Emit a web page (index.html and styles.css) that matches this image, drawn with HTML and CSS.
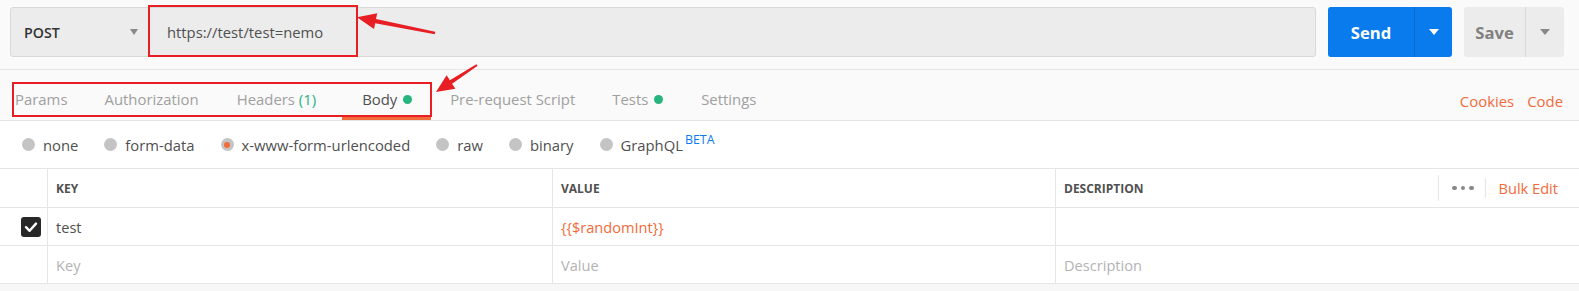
FILE: index.html
```html
<!DOCTYPE html>
<html>
<head>
<meta charset="utf-8">
<link rel="stylesheet" href="styles.css">
</head>
<body>
<div class="page">
  <div class="topbar">
    <div class="urlbar">
      <div class="method"><span class="method-name">POST</span><span class="caret grey"></span></div>
      <div class="url">https://test/test=nemo</div>
    </div>
    <div class="btn send"><span class="btn-main">Send</span><span class="btn-drop"><span class="caret white"></span></span></div>
    <div class="btn save"><span class="btn-main">Save</span><span class="btn-drop"><span class="caret grey big"></span></span></div>
  </div>

  <div class="tabs">
    <div class="tab first">Params</div>
    <div class="tab auth">Authorization</div>
    <div class="tab headers">Headers <span class="count">(1)</span></div>
    <div class="tab active">Body <span class="gdot"></span></div>
    <div class="tab">Pre-request Script</div>
    <div class="tab tests">Tests <span class="gdot"></span></div>
    <div class="tab">Settings</div>
    <div class="links"><span>Cookies</span><span>Code</span></div>
  </div>

  <div class="bodytypes">
    <div class="radio"><span class="rdot"></span>none</div>
    <div class="radio"><span class="rdot"></span>form-data</div>
    <div class="radio"><span class="rdot on"></span>x-www-form-urlencoded</div>
    <div class="radio"><span class="rdot"></span>raw</div>
    <div class="radio"><span class="rdot"></span>binary</div>
    <div class="radio"><span class="rdot"></span>GraphQL<span class="beta">BETA</span></div>
  </div>

  <div class="table">
    <div class="row head">
      <div class="cell first"></div>
      <div class="cell">KEY</div>
      <div class="cell">VALUE</div>
      <div class="cell desc">DESCRIPTION
        <div class="actions">
          <div class="more"><span></span><span></span><span></span></div>
          <div class="bulk">Bulk Edit</div>
        </div>
      </div>
    </div>
    <div class="row">
      <div class="cell first"><span class="cb"><svg width="20" height="20" viewBox="0 0 20 20"><path d="M5 10.2 L8.6 13.8 L15 6.6" fill="none" stroke="#fff" stroke-width="2.4" stroke-linecap="round" stroke-linejoin="round"/></svg></span></div>
      <div class="cell text">test</div>
      <div class="cell var">{{$randomInt}}</div>
      <div class="cell"></div>
    </div>
    <div class="row">
      <div class="cell first"></div>
      <div class="cell ph">Key</div>
      <div class="cell ph">Value</div>
      <div class="cell ph">Description</div>
    </div>
  </div>
  <div class="footer"></div>

  <svg class="annot" width="1579" height="291" viewBox="0 0 1579 291">
    <rect x="149" y="6" width="208" height="50" fill="none" stroke="#e81e25" stroke-width="2"/>
    <rect x="13" y="83" width="418" height="33" fill="none" stroke="#e81e25" stroke-width="2"/>
    <polygon fill="#e81e25" points="357,17.3 377.2,13.3 376,19 435.2,31.8 434.8,34.2 375.2,23.3 374,28.9"/>
    <polygon fill="#e81e25" points="436,92 446.6,75.3 449.9,80.3 476.4,64.2 477.6,65.8 452.1,83.7 455.4,88.7"/>
  </svg>
</div>
</body>
</html>
```

FILE: styles.css
```css
* { box-sizing: border-box; }

body {
  margin: 0;
  font-family: "Open Sans", "Liberation Sans", sans-serif;
  font-size: 14.6px;
  color: #505050;
  background: #f7f7f7;
}

.page {
  position: relative;
  width: 1579px;
  height: 291px;
  overflow: hidden;
  background: #f7f7f7;
}

/* top bar */
.topbar {
  display: flex;
  align-items: center;
  height: 70px;
  padding: 7px 15px 12px 10px;
  background: #fafafa;
  border-bottom: 1px solid #e6e6e6;
}

.urlbar {
  flex: 1;
  display: flex;
  height: 50px;
  border: 1px solid #d9d9d9;
  border-radius: 3px;
  background: #ececec;
}

.method {
  width: 138px;
  display: flex;
  align-items: center;
  justify-content: space-between;
  padding: 0 10px 0 13px;
  border-right: 1px solid #d9d9d9;
}

.method-name {
  font-weight: 600;
  font-size: 14.2px;
  color: #333;
}

.url {
  display: flex;
  align-items: center;
  padding-left: 18px;
  color: #505050;
  font-size: 14.8px;
}

.caret {
  width: 0;
  height: 0;
  border-left: 4.5px solid transparent;
  border-right: 4.5px solid transparent;
  border-top: 6px solid #888;
}
.caret.white { border-top-color: #fff; border-left-width: 5px; border-right-width: 5px; }
.caret.big { border-left-width: 5px; border-right-width: 5px; }

.btn {
  display: flex;
  height: 50px;
  margin-left: 12px;
  border-radius: 3px;
}

.btn-main {
  display: flex;
  align-items: center;
  justify-content: center;
  font-weight: 700;
  font-size: 16.6px;
}

.btn-drop {
  flex: 1;
  display: flex;
  align-items: center;
  justify-content: center;
}

.send {
  width: 124px;
  background: #097bed;
  color: #fff;
}
.send .btn-main {
  width: 87px;
  border-right: 1px solid #0a68cc;
}

.save {
  width: 100px;
  background: #ececec;
  color: #808080;
}
.save .btn-main {
  width: 62px;
  border-right: 1px solid #d9d9d9;
}

/* tabs */
.tabs {
  display: flex;
  align-items: flex-end;
  height: 51px;
  background: #fafafa;
  border-bottom: 1px solid #e6e6e6;
  font-size: 14.9px;
}

.tab {
  height: 40px;
  display: flex;
  align-items: center;
  padding: 1px 19px 0;
  border-bottom: 3px solid transparent;
  color: #a0a0a0;
  white-space: pre;
}
.tab.first { padding-left: 15px; }
.tab.auth { padding-left: 18px; }
.tab.headers { padding-right: 26px; }
.tab.active {
  color: #505050;
  padding-left: 20px;
  border-bottom-color: #f26b3a;
}
.tab.tests { padding-left: 18px; }

.count { color: #26b47f; }

.gdot {
  display: inline-block;
  width: 9px;
  height: 9px;
  border-radius: 50%;
  background: #26b47f;
  margin-left: 2px;
}

.links {
  margin-left: auto;
  height: 40px;
  display: flex;
  align-items: center;
  gap: 13px;
  padding: 1px 16px 0 0;
  color: #f26b3a;
}

/* body type radios */
.bodytypes {
  display: flex;
  align-items: center;
  height: 48px;
  padding-left: 22px;
  background: #fff;
  border-bottom: 1px solid #e6e6e6;
  font-size: 14.8px;
}

.radio {
  display: flex;
  align-items: center;
  margin-right: 26px;
  color: #505050;
  line-height: 20px;
}

.rdot {
  position: relative;
  width: 13px;
  height: 13px;
  border-radius: 50%;
  background: #c4c4c4;
  margin-right: 8px;
}
.rdot.on::after {
  content: "";
  position: absolute;
  left: 3.5px;
  top: 3.5px;
  width: 6px;
  height: 6px;
  border-radius: 50%;
  background: #f26b3a;
}

.beta {
  align-self: flex-start;
  margin-top: -2px;
  margin-left: 2px;
  font-size: 12.4px;
  line-height: 14px;
  color: #097bed;
}

/* table */
.table {
  background: #fff;
}

.row {
  display: grid;
  grid-template-columns: 47px 505px 503px 1fr;
  height: 38px;
  border-bottom: 1px solid #e6e6e6;
}
.row.head {
  height: 39px;
}

.cell {
  display: flex;
  align-items: center;
  padding-left: 8px;
  border-left: 1px solid #e6e6e6;
  min-width: 0;
}
.cell.first {
  border-left: none;
  padding-left: 21px;
}

.head .cell {
  font-size: 12px;
  font-weight: 700;
  color: #505050;
}

.actions {
  margin-left: auto;
  display: flex;
  align-items: center;
}

.more {
  height: 26px;
  display: flex;
  align-items: center;
  gap: 4px;
  padding: 0 11px 0 13px;
  border-left: 1px solid #e6e6e6;
}
.more span {
  width: 4.5px;
  height: 4.5px;
  border-radius: 50%;
  background: #888;
}

.bulk {
  height: 20px;
  display: flex;
  align-items: center;
  padding: 0 21px 0 13px;
  border-left: 1px solid #e6e6e6;
  font-size: 14.6px;
  font-weight: 400;
  color: #f26b3a;
}

.cb {
  display: flex;
  width: 20px;
  height: 20px;
  border-radius: 3px;
  background: #282828;
}

.text { color: #505050; }
.var { color: #f26b3a; }
.ph { color: #b3b3b3; }

.footer {
  height: 8px;
  background: #f7f7f7;
}

.annot {
  position: absolute;
  left: 0;
  top: 0;
  pointer-events: none;
}
```
